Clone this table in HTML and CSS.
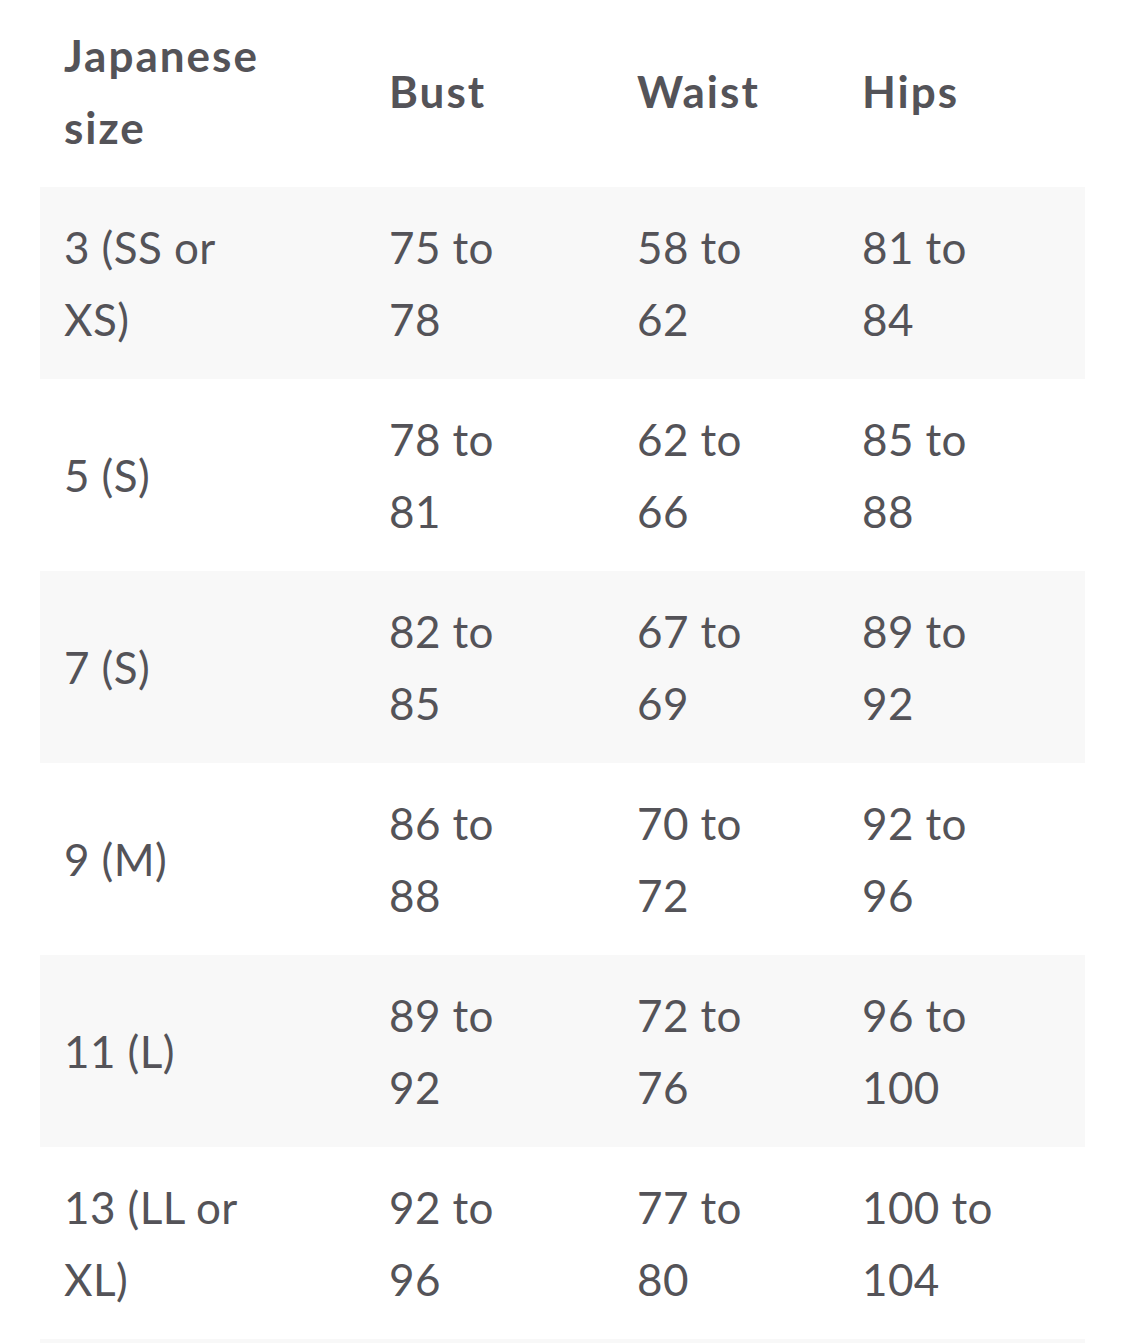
FILE: index.html
```html
<!DOCTYPE html>
<html lang="en">
<head>
<meta charset="utf-8">
<title>Japanese size chart</title>
<link rel="stylesheet" href="styles.css">
</head>
<body>
<table class="size-table">
  <colgroup>
    <col class="c1"><col class="c2"><col class="c3"><col class="c4">
  </colgroup>
  <thead>
    <tr class="head-row">
      <th>Japanese size</th>
      <th>Bust</th>
      <th>Waist</th>
      <th>Hips</th>
    </tr>
  </thead>
  <tbody>
    <tr><td>3 (SS or XS)</td><td>75 to 78</td><td>58 to 62</td><td>81 to 84</td></tr>
    <tr><td>5 (S)</td><td>78 to 81</td><td>62 to 66</td><td>85 to 88</td></tr>
    <tr><td>7 (S)</td><td>82 to 85</td><td>67 to 69</td><td>89 to 92</td></tr>
    <tr><td>9 (M)</td><td>86 to 88</td><td>70 to 72</td><td>92 to 96</td></tr>
    <tr><td>11 (L)</td><td>89 to 92</td><td>72 to 76</td><td>96 to 100</td></tr>
    <tr><td>13 (LL or XL)</td><td>92 to 96</td><td>77 to 80</td><td>100 to 104</td></tr>
    <tr><td>15 (3L or XXL)</td><td>96 to 100</td><td>81 to 84</td><td>104 to 108</td></tr>
  </tbody>
</table>
</body>
</html>
```

FILE: styles.css
```css
html, body {
  margin: 0;
  padding: 0;
  background: #ffffff;
}

body {
  padding: 0 40px;
  font-family: Lato, "Open Sans", sans-serif;
  color: #545358;
}

.size-table {
  width: 1045px;
  table-layout: fixed;
  border-collapse: collapse;
  border-spacing: 0;
  font-size: 44px;
  line-height: 72px;
}

.c1 { width: 325px; }
.c2 { width: 248px; }
.c3 { width: 225px; }
.c4 { width: 247px; }

.size-table th,
.size-table td {
  text-align: left;
  vertical-align: middle;
  padding: 24px 84px 24px 24px;
}

.size-table th {
  font-weight: 700;
  letter-spacing: 2px;
  padding-top: 19px;
}

.size-table tbody tr:nth-child(odd) {
  background: #f8f8f8;
}

.size-table td {
  font-weight: 400;
  letter-spacing: 0.4px;
  height: 144px;
}
```
